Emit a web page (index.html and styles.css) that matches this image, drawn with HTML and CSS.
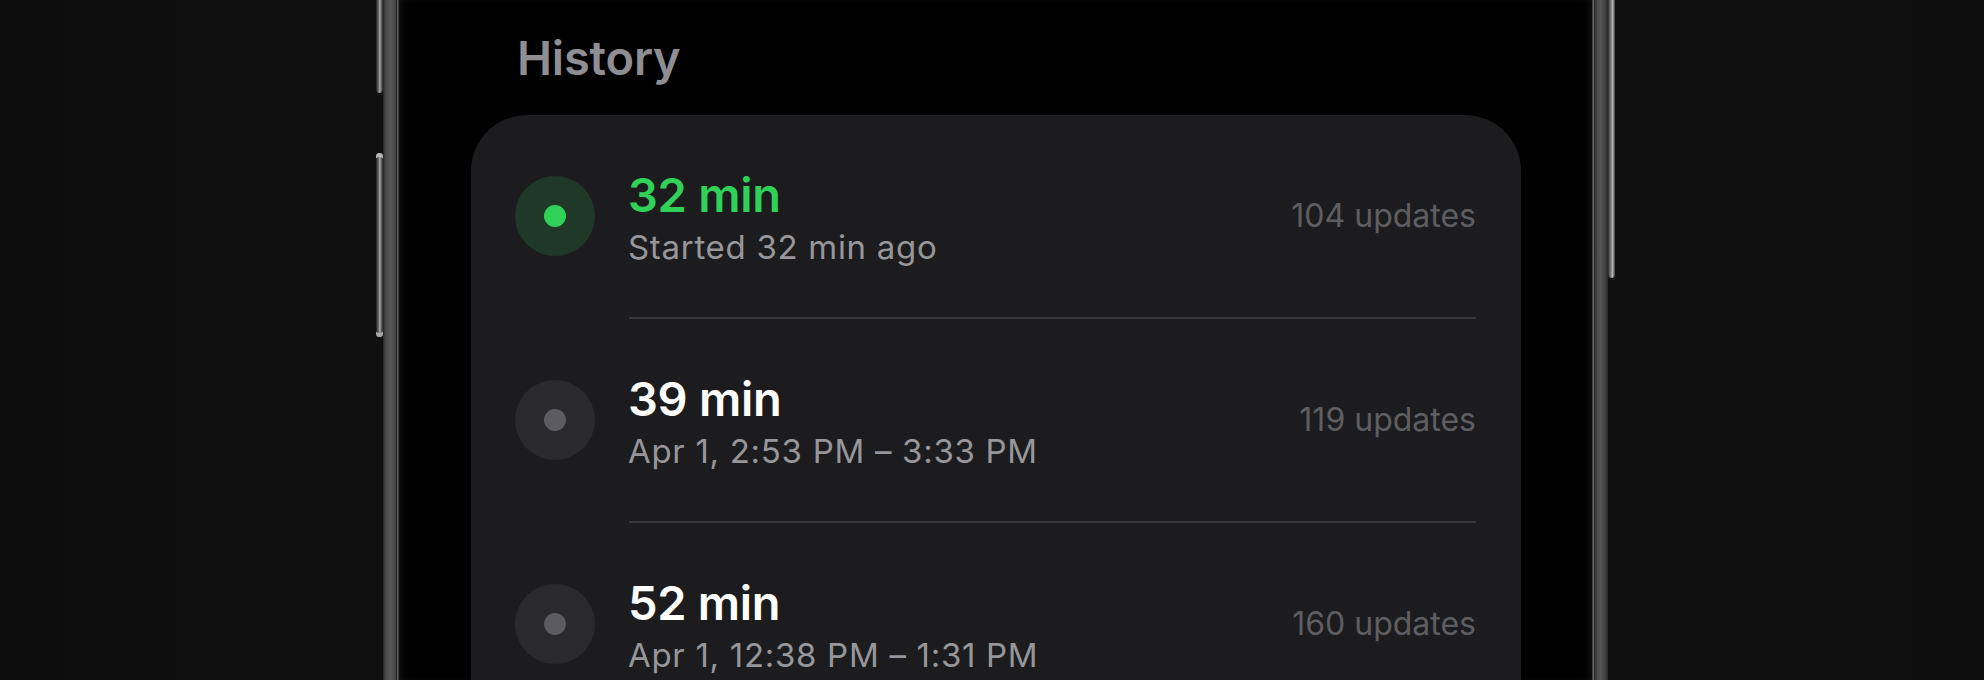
FILE: index.html
```html
<!DOCTYPE html>
<html lang="en">
<head>
<meta charset="utf-8">
<title>History</title>
<link rel="stylesheet" href="styles.css">
</head>
<body>
<div class="stage">
  <div class="rail rail-left">
    <div class="btn btn-top"></div>
    <div class="btn btn-mid"></div>
  </div>
  <div class="frame frame-left"></div>
  <div class="screen">
    <h2 class="section-title">History</h2>
    <div class="card">
      <div class="row">
        <div class="dot dot-active"><span class="dot-core"></span></div>
        <div class="row-text">
          <div class="duration duration-active">32 min</div>
          <div class="range">Started 32 min ago</div>
        </div>
        <div class="count">104 updates</div>
      </div>
      <div class="sep"></div>
      <div class="row">
        <div class="dot"><span class="dot-core"></span></div>
        <div class="row-text">
          <div class="duration">39 min</div>
          <div class="range">Apr 1, 2:53 PM – 3:33 PM</div>
        </div>
        <div class="count">119 updates</div>
      </div>
      <div class="sep"></div>
      <div class="row">
        <div class="dot"><span class="dot-core"></span></div>
        <div class="row-text">
          <div class="duration">52 min</div>
          <div class="range">Apr 1, 12:38 PM – 1:31 PM</div>
        </div>
        <div class="count">160 updates</div>
      </div>
    </div>
  </div>
  <div class="frame frame-right"></div>
  <div class="rail rail-right">
    <div class="btn btn-right"></div>
  </div>
</div>
</body>
</html>
```
FILE: styles.css
```css
html, body {
  margin: 0;
  padding: 0;
  background: #0e0e0e;
}

body {
  font-family: Inter, "Noto Sans", "Liberation Sans", sans-serif;
  -webkit-font-smoothing: antialiased;
}

.stage {
  display: flex;
  height: 680px;
  overflow: hidden;
  padding-left: 376px;
  background: linear-gradient(90deg, #0d0d0d 0%, #101010 18%, #0e0e0e 40%, #0c0c0c 60%, #101010 85%, #0e0e0e 100%);
}

.rail {
  width: 7px;
  display: flex;
  flex-direction: column;
  flex-shrink: 0;
}

.btn {
  width: 7px;
  background: linear-gradient(90deg, #1c1c1c 0%, #6a6a6a 35%, #a8a8a8 55%, #5a5a5a 80%, #262626 100%);
  border-radius: 0 0 4px 4px;
  box-shadow: 0 -2px 0 0 #0a0a0a inset;
}

.btn-top {
  height: 95px;
}

.btn-mid {
  margin-top: 58px;
  height: 184px;
  border-radius: 4px;
  box-shadow: 0 6px 0 -2px #b9b9b9 inset, 0 -6px 0 -2px #a9a9a9 inset;
}

.btn-right {
  height: 280px;
}

.rail-right .btn {
  background: linear-gradient(90deg, #2a2a2a 0%, #7a7a7a 40%, #b5b5b5 65%, #3a3a3a 100%);
}

.frame {
  width: 16px;
  flex-shrink: 0;
}

.frame-left {
  background: linear-gradient(90deg, #262626 0%, #4a4a4a 18%, #575757 50%, #444 78%, #1c1c1c 86%, #777 93%, #151515 100%);
}

.frame-right {
  background: linear-gradient(90deg, #151515 0%, #7a7a7a 8%, #262626 16%, #484848 30%, #575757 55%, #444 80%, #262626 100%);
}

.screen {
  width: 1193px;
  flex-shrink: 0;
  background: #000;
  box-sizing: border-box;
  padding: 30px 71px 0 72px;
  box-shadow: inset 6px 0 8px -4px rgba(40, 40, 40, 0.5), inset -6px 0 8px -4px rgba(40, 40, 40, 0.5);
}

.section-title {
  margin: 0 0 29px 46px;
  font-size: 47px;
  line-height: 56px;
  font-weight: 600;
  color: #8e8e93;
  letter-spacing: -0.2px;
}

.card {
  background: #1c1c1e;
  border-radius: 56px;
  padding: 0 45px 40px 44px;
}

.row {
  display: flex;
  align-items: center;
  height: 202px;
}

.dot {
  width: 80px;
  height: 80px;
  border-radius: 50%;
  background: #2a2a2c;
  display: flex;
  align-items: center;
  justify-content: center;
  flex-shrink: 0;
}

.dot-core {
  width: 22px;
  height: 22px;
  border-radius: 50%;
  background: #5b5b60;
}

.dot-active {
  background: #1f3827;
}

.dot-active .dot-core {
  background: #30d158;
}

.row-text {
  flex: 1;
  margin-left: 33px;
}

.duration {
  font-size: 47px;
  line-height: 62px;
  font-weight: 600;
  color: #ffffff;
  letter-spacing: -0.3px;
}

.duration-active {
  color: #30d158;
}

.range {
  font-size: 33px;
  line-height: 42px;
  font-weight: 400;
  color: #96969b;
  letter-spacing: 0.7px;
}

.count {
  font-size: 32px;
  line-height: 40px;
  font-weight: 400;
  color: #5e5e62;
  letter-spacing: 0;
}

.sep {
  height: 2px;
  margin-left: 114px;
  background: #38383a;
}
```
